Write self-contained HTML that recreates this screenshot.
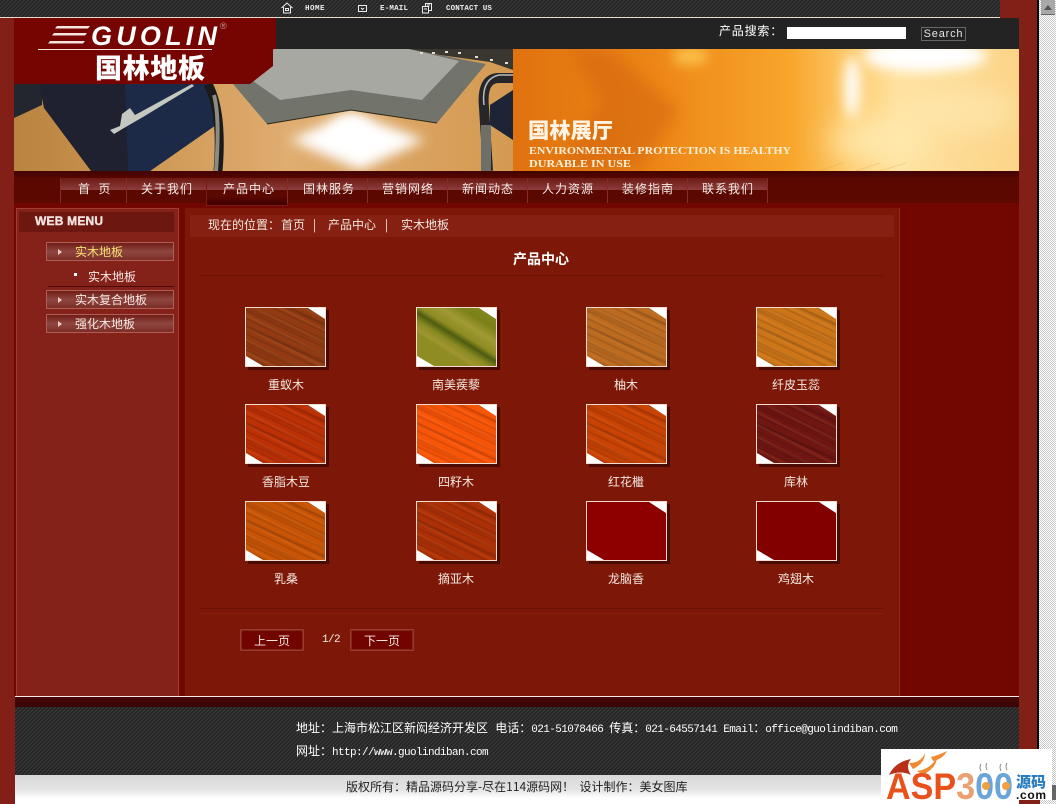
<!DOCTYPE html>
<html lang="zh"><head><meta charset="utf-8"><title>国林地板</title>
<style>
html,body{margin:0;padding:0;width:1056px;height:804px;overflow:hidden}
body{position:relative;background:#822018;font:12px "WenQuanYi Zen Hei","Noto Sans CJK SC",sans-serif;color:#f4e8e0}
.a{position:absolute}
.t{position:absolute;white-space:nowrap;line-height:16px;height:16px}
.c{text-align:center;width:120px}
.stripe{background:repeating-linear-gradient(135deg,#3a3a3a 0 .9px,#252525 .9px 2.828px)}
.nav{position:absolute;top:178px;height:25px;border-left:1px solid #8a2c24;background:linear-gradient(#6d1a14 0,#8c3c3a 12px,#5a0800 12px)}
.nt{position:absolute;top:181px;white-space:nowrap;line-height:16px;color:#f5ece6;letter-spacing:1px}
.mi{position:absolute;left:46px;width:126px;height:17px;border:1px solid #b05f58;background:linear-gradient(#701c16,#8e4640 50%,#7d2c26)}
.ar{position:absolute;left:58px;width:0;height:0;border-left:4px solid #e8c8c0;border-top:3px solid transparent;border-bottom:3px solid transparent}
.th{position:absolute;width:79px;height:58px;background:#fff;border:1px solid #f2dcd0;box-shadow:3px 3px 0 #4a0a04;overflow:hidden}
.th div{width:100%;height:100%;clip-path:polygon(0 0,62px 0,100% 11px,100% 100%,17px 100%,0 48px)}
.w{background-image:repeating-linear-gradient(25deg,rgba(0,0,0,.1) 0 1.500px,transparent 2.500px 7px),repeating-linear-gradient(27deg,rgba(255,190,110,.08) 0 2px,transparent 3px 11px),repeating-linear-gradient(24deg,rgba(0,0,0,.08) 0 3px,transparent 4px 17px)}
.pg{position:absolute;top:629px;height:20px;border:1px solid #963a30;background:#720400;box-shadow:inset 0 0 0 1px #84261c;text-align:center;line-height:21px;color:#f4e8e0}
.m{font-family:"Liberation Mono","WenQuanYi Zen Hei",monospace;font-size:11px;letter-spacing:-.6px}
.m span{letter-spacing:0}
</style></head><body>

<!-- scrollbar -->
<div class="a" style="left:1037px;top:0;width:2px;height:804px;background:#000"></div>
<div class="a" style="left:1039px;top:0;width:17px;height:804px;background:repeating-conic-gradient(#c8c8c8 0 25%,#fff 0 50%) 0 0/2px 2px"></div>
<div class="a" style="left:1041px;top:0;width:14px;height:14px;background:#a8a8a8;border-bottom:1px solid #666"></div>
<div class="a" style="left:1044px;top:5px;width:0;height:0;border-left:4px solid transparent;border-right:4px solid transparent;border-bottom:5px solid #555"></div>

<!-- top bar -->
<div class="a stripe" style="left:0;top:0;width:1000px;height:17px"></div>
<div class="a" style="left:0;top:17px;width:1000px;height:1px;background:#e8dcc8"></div>
<svg class="a" style="left:280px;top:2px" width="14" height="13" viewBox="0 0 14 13" fill="none" stroke="#eee" stroke-width="1"><path d="M1.500 6L7 1l5.500 5M3.500 5V11h7V5M5.500 6.500h3v2h-3z"/></svg>
<svg class="a" style="left:358px;top:5px" width="10" height="8" viewBox="0 0 10 8" fill="none" stroke="#eee" stroke-width="1"><path d="M.5.500h8v6h-8zM3 3l1.500 1.500L6 3"/></svg>
<svg class="a" style="left:422px;top:3px" width="11" height="11" viewBox="0 0 11 11" fill="none" stroke="#eee" stroke-width="1"><path d="M3.500 3V.500h6v7H7M.5 3.500h6v6.500h-6zM2 6h3M5 2h3"/></svg>
<div class="t" style="left:305px;top:1px;font:bold 7.500px/17px 'Liberation Mono',monospace;color:#eee;letter-spacing:.5px">HOME</div>
<div class="t" style="left:380px;top:1px;font:bold 7.500px/17px 'Liberation Mono',monospace;color:#eee;letter-spacing:.2px">E-MAIL</div>
<div class="t" style="left:446px;top:1px;font:bold 7.500px/17px 'Liberation Mono',monospace;color:#eee;letter-spacing:.1px">CONTACT US</div>

<!-- header band -->
<div class="a" style="left:14px;top:18px;width:1005px;height:31px;background:#232323"></div>
<div class="t" style="left:719px;top:23px;color:#fff;letter-spacing:.8px">产品搜索：</div>
<div class="a" style="left:787px;top:27px;width:119px;height:12px;background:#fff"></div>
<div class="a" style="left:921px;top:27px;width:43px;height:12px;border:1px solid #666;font:11px/13px 'Liberation Sans',sans-serif;color:#e4e4e4;text-align:center;letter-spacing:.8px">Search</div>

<!-- banner -->
<svg class="a" style="left:14px;top:49px" width="1005" height="122" viewBox="14 49 1005 122">
<defs>
<linearGradient id="fl" x1="0" x2="1" y1="0" y2="0"><stop offset="0" stop-color="#b98440"/><stop offset=".2" stop-color="#c9924e"/><stop offset=".55" stop-color="#e0ad70"/><stop offset="1" stop-color="#d49a52"/></linearGradient>
<linearGradient id="or" x1="0" x2="1" y1="0" y2="0"><stop offset="0" stop-color="#e0720f"/><stop offset=".3" stop-color="#ee8818"/><stop offset=".55" stop-color="#f8a62c"/><stop offset=".66" stop-color="#fdc868"/><stop offset=".76" stop-color="#ffe2a0"/><stop offset="1" stop-color="#fbd488"/></linearGradient>
<filter id="b6" x="-100%" y="-100%" width="300%" height="300%"><feGaussianBlur stdDeviation="6"/></filter>
<filter id="b12" x="-100%" y="-100%" width="300%" height="300%"><feGaussianBlur stdDeviation="13"/></filter>
<filter id="b2" x="-30%" y="-30%" width="160%" height="160%"><feGaussianBlur stdDeviation="8"/></filter>
<clipPath id="cl"><rect x="14" y="49" width="499" height="122"/></clipPath>
<clipPath id="cr"><rect x="513" y="49" width="506" height="122"/></clipPath>
</defs>
<g clip-path="url(#cl)">
<rect x="14" y="49" width="499" height="122" fill="url(#fl)"/>
<polygon points="351,112 425,140 360,170 290,140" fill="#fff" filter="url(#b6)"/>
<ellipse cx="351" cy="130" rx="20" ry="12" fill="#fff" filter="url(#b6)"/>
<polygon points="233,84 267,124 351,110 437,123 486,64 409,49 260,49" fill="#72746c"/>
<polygon points="274,49 253,81 280,100 351,90 422,100 459,61 409,49" fill="#a8a8a2"/>
<polyline points="267,124 351,110 437,123" fill="none" stroke="#2e2a18" stroke-width="1"/>
<polygon points="409,49 513,49 513,70 490,62 440,55" fill="#39372f"/>
<g fill="#e0e0d8"><rect x="420" y="52" width="3" height="2"/><rect x="432" y="52" width="3" height="2"/><rect x="445" y="51" width="3" height="2"/><rect x="458" y="52" width="3" height="2"/><rect x="475" y="56" width="3" height="2"/><rect x="490" y="59" width="3" height="2"/><rect x="505" y="62" width="3" height="2"/></g>
<polygon points="14,84 42,84 42,105 14,118" fill="#23252f"/>
<polygon points="39,84 210,84 216,125 150,171 91,171 44,108" fill="#1f2130"/>
<polygon points="125,84 210,84 216,125 150,171 128,171" fill="#1c2a48"/>
<polygon points="110,130 114,134 124,128 143,117 194,86 192,84 135,115 130,108 122,114 120,126" fill="#c4c8c0"/>
<path d="M208 84q15 28 10 87" fill="none" stroke="#1a1a1a" stroke-width="9"/>
<path d="M214 95q6 22 2 76" fill="none" stroke="#8c8c80" stroke-width="4"/>
<path d="M513 78h-14q-18 0-15 30l4 63" fill="none" stroke="#26262a" stroke-width="10"/>
<path d="M513 75h-14q-18 4-15 30" fill="none" stroke="#b8bcc0" stroke-width="1.500"/>
<polygon points="490,105 513,90 513,140 490,125" fill="#1c2436"/>
<rect x="481" y="125" width="10" height="46" fill="#6d7068"/>
</g>
<g clip-path="url(#cr)">
<rect x="513" y="49" width="506" height="122" fill="url(#or)"/>
<polygon points="610,49 680,110 640,171 560,171 600,100 570,49" fill="#d0620a" opacity=".5" filter="url(#b2)"/>
<ellipse cx="690" cy="56" rx="18" ry="9" fill="#ffd860" opacity=".7" filter="url(#b6)"/>
<ellipse cx="925" cy="56" rx="62" ry="16" fill="#fff" filter="url(#b6)"/>
<ellipse cx="852" cy="88" rx="8" ry="32" fill="#fff" filter="url(#b6)"/>
<ellipse cx="880" cy="140" rx="50" ry="24" fill="#ffeab0" opacity=".8" filter="url(#b12)"/>
<ellipse cx="960" cy="110" rx="60" ry="22" fill="#ffe8b0" opacity=".7" filter="url(#b12)"/>
<g stroke="#d88a30" stroke-width=".6" opacity=".4"><path d="M820 171l22-8M856 171l24-8M880 171l26-8"/></g>
</g>
<text x="528" y="138" font-family="'Noto Sans CJK SC',sans-serif" font-weight="900" font-size="21" fill="#fff3e4" textLength="85" lengthAdjust="spacingAndGlyphs">国林展厅</text>
<text x="529" y="154" font-family="'Liberation Serif',serif" font-weight="700" font-size="11" fill="#fff0d8" textLength="262" lengthAdjust="spacingAndGlyphs">ENVIRONMENTAL PROTECTION IS HEALTHY</text>
<text x="529" y="167" font-family="'Liberation Serif',serif" font-weight="700" font-size="11" fill="#fff0d8" textLength="102" lengthAdjust="spacingAndGlyphs">DURABLE IN USE</text>
</svg>

<!-- logo -->
<div class="a" style="left:14px;top:18px;width:262px;height:66px;background:#760400;clip-path:polygon(0 0,100% 0,100% 31px,259px 31px,259px 48px,236px 66px,0 66px)"></div>
<svg class="a" style="left:14px;top:18px" width="230" height="66" viewBox="0 0 230 66">
<path d="M43 8h33l-2 2.500H41zM40 15h33l-2 2.500H38zM36 23h35l-2 2.500H34z" fill="#f5e5e0"/>
<rect x="24" y="31" width="174" height="1" fill="#f5e5e0"/>
<text x="77" y="27" font-family="'Liberation Sans',sans-serif" font-weight="700" font-style="italic" font-size="27" fill="#fff" textLength="126">GUOLIN</text>
<text x="206" y="11" font-family="'Liberation Sans',sans-serif" font-size="9" fill="#c89a94">®</text>
<text x="81" y="60" font-family="'Noto Sans CJK SC',sans-serif" font-weight="900" font-size="27" fill="#fff" textLength="110">国林地板</text>
</svg>

<!-- nav band -->
<div class="a" style="left:14px;top:171px;width:1005px;height:32px;background:linear-gradient(#430400 0,#500500 5px,#5a0800 7px)"></div>
<!-- main bg -->
<div class="a" style="left:14px;top:203px;width:1005px;height:493px;background:#720600"></div>

<div class="nav" style="left:60px;width:65px"></div>
<div class="nav" style="left:126px;width:79px"></div>
<div class="a" style="left:206px;top:178px;width:80px;height:27px;border:1px solid #7a1a14;border-top:0;background:linear-gradient(#6d1a14 0,#8c3c3a 12px,#5a0800 12px,#5a0800 19px,#3e0000)"></div>
<div class="nav" style="left:287px;width:79px"></div>
<div class="nav" style="left:367px;width:79px"></div>
<div class="nav" style="left:447px;width:79px"></div>
<div class="nav" style="left:527px;width:79px"></div>
<div class="nav" style="left:607px;width:79px"></div>
<div class="nav" style="left:687px;width:79px;border-right:1px solid #8a2c24"></div>
<div class="nt" style="left:78px;letter-spacing:1px">首&nbsp;&nbsp;页</div>
<div class="nt" style="left:141px">关于我们</div>
<div class="nt" style="left:223px">产品中心</div>
<div class="nt" style="left:303px">国林服务</div>
<div class="nt" style="left:382px">营销网络</div>
<div class="nt" style="left:462px">新闻动态</div>
<div class="nt" style="left:542px">人力资源</div>
<div class="nt" style="left:622px">装修指南</div>
<div class="nt" style="left:702px">联系我们</div>

<!-- sidebar -->
<div class="a" style="left:16px;top:208px;width:161px;height:488px;background:#84221a;border:1px solid #a43c32;border-bottom:0"></div>
<div class="a" style="left:19px;top:212px;width:155px;height:20px;background:#6c1710"></div>
<div class="t" style="left:35px;top:213px;font:bold 12px/16px 'Liberation Sans',sans-serif;color:#f4e4e0;letter-spacing:.2px;-webkit-text-stroke:.4px #f4e4e0">WEB MENU</div>
<div class="mi" style="top:242px"></div><div class="ar" style="top:249px"></div>
<div class="t" style="left:75px;top:244px;color:#f6e070">实木地板</div>
<div class="a" style="left:74px;top:273px;width:3px;height:3px;background:#fff"></div>
<div class="t" style="left:88px;top:269px">实木地板</div>
<div class="a" style="left:48px;top:286px;width:126px;height:1px;background:#4e0a06"></div>
<div class="mi" style="top:290px"></div><div class="ar" style="top:297px"></div>
<div class="t" style="left:75px;top:292px">实木复合地板</div>
<div class="mi" style="top:314px"></div><div class="ar" style="top:321px"></div>
<div class="t" style="left:75px;top:316px">强化木地板</div>

<!-- content -->
<div class="a" style="left:179px;top:208px;width:6px;height:488px;background:#6e0a02"></div>
<div class="a" style="left:185px;top:208px;width:714px;height:488px;background:#7d1808;border-right:1px solid #8e2a1c"></div>
<div class="a" style="left:190px;top:215px;width:704px;height:22px;background:#852012"></div>
<div class="t" style="left:208px;top:217px">现在的位置：</div>
<div class="t" style="left:281px;top:217px">首页</div>
<div class="t" style="left:313px;top:217px">|</div>
<div class="t" style="left:328px;top:217px">产品中心</div>
<div class="t" style="left:385px;top:217px">|</div>
<div class="t" style="left:401px;top:217px">实木地板</div>
<div class="t" style="left:441px;top:251px;width:200px;text-align:center;font-size:14px;font-weight:700;color:#fff">产品中心</div>
<div class="a" style="left:200px;top:275px;width:684px;height:1px;background:#6c1206"></div>

<div class="th" style="left:245px;top:307px"><div class="w" style="background-color:#923a12"></div></div>
<div class="th" style="left:416px;top:307px"><div style="background:linear-gradient(32deg,#8e8c22 0 30%,#a09630 34%,#8a8a22 42%,#4e5c10 50%,#8e8c22 56%,#a09a34 68%,#7a8018 80%,#8e8c22)"></div></div>
<div class="th" style="left:586px;top:307px"><div class="w" style="background-color:#bc6a20"></div></div>
<div class="th" style="left:756px;top:307px"><div class="w" style="background-color:#cc7418"></div></div>
<div class="th" style="left:245px;top:404px"><div class="w" style="background-color:#bc3006"></div></div>
<div class="th" style="left:416px;top:404px"><div class="w" style="background-color:#f85408"></div></div>
<div class="th" style="left:586px;top:404px"><div class="w" style="background-color:#c84204"></div></div>
<div class="th" style="left:756px;top:404px"><div class="w" style="background-color:#701612"></div></div>
<div class="th" style="left:245px;top:501px"><div class="w" style="background-color:#c85406"></div></div>
<div class="th" style="left:416px;top:501px"><div class="w" style="background-color:#ac3006"></div></div>
<div class="th" style="left:586px;top:501px"><div style="background:#8e0000"></div></div>
<div class="th" style="left:756px;top:501px"><div style="background:#820000"></div></div>

<div class="t c" style="left:226px;top:377px">重蚁木</div>
<div class="t c" style="left:396px;top:377px">南美蒺藜</div>
<div class="t c" style="left:566px;top:377px">柚木</div>
<div class="t c" style="left:736px;top:377px">纤皮玉蕊</div>
<div class="t c" style="left:226px;top:474px">香脂木豆</div>
<div class="t c" style="left:396px;top:474px">四籽木</div>
<div class="t c" style="left:566px;top:474px">红花檵</div>
<div class="t c" style="left:736px;top:474px">库林</div>
<div class="t c" style="left:226px;top:571px">乳桑</div>
<div class="t c" style="left:396px;top:571px">摘亚木</div>
<div class="t c" style="left:566px;top:571px">龙脑香</div>
<div class="t c" style="left:736px;top:571px">鸡翅木</div>

<div class="a" style="left:200px;top:608px;width:684px;height:1px;background:#6c1206"></div>
<div class="a" style="left:200px;top:613px;width:684px;height:1px;background:#841e0e"></div>

<div class="pg" style="left:240px;width:62px">上一页</div>
<div class="t m" style="left:322px;top:632px">1/2</div>
<div class="pg" style="left:350px;width:62px">下一页</div>

<!-- footer -->
<div class="a" style="left:15px;top:696px;width:1004px;height:1px;background:#f4ece8"></div>
<div class="a" style="left:15px;top:697px;width:1004px;height:10px;background:linear-gradient(#4a0808,#380404)"></div>
<div class="a stripe" style="left:15px;top:707px;width:1004px;height:68px"></div>
<div class="a" style="left:15px;top:775px;width:1004px;height:29px;background:linear-gradient(#d8d8d8,#e4e4e4 50%,#fff 80%)"></div>
<div class="t m" style="left:296px;top:721px;color:#fff"><span style="font-size:12px">地址：上海市松江区新闳经济开发区 电话：</span>021-51078466 <span style="font-size:12px">传真：</span>021-64557141 Email<span style="font-size:12px">：</span>office@guolindiban.com</div>
<div class="t m" style="left:296px;top:744px;color:#fff"><span style="font-size:12px">网址：</span>http://www.guolindiban.com</div>
<div class="t" style="left:346px;top:779px;color:#222">版权所有：精品源码分享-尽在114源码网！&nbsp;&nbsp;设计制作：美女图库</div>

<!-- watermark -->
<div class="a" style="left:1019px;top:800px;width:21px;height:4px;background:#822018"></div>
<div class="a" style="left:881px;top:749px;width:171px;height:51px;background:#fff"></div>
<svg class="a" style="left:881px;top:749px" width="171" height="52" viewBox="0 0 171 52">
<path d="M8 26Q14 13 30 10Q24 17 30 26Q20 21 8 26z" fill="#b83018"/>
<path d="M28 14Q40 14 44 4Q44 14 32 20zM36 22Q50 20 56 8Q56 18 42 26zM50 8Q58 6 66 2Q62 10 52 12z" fill="#ee8a30"/>
<text x="5" y="50" font-family="'Liberation Sans',sans-serif" font-weight="700" font-size="37" textLength="127" lengthAdjust="spacingAndGlyphs"><tspan fill="#e8501c">ASP</tspan><tspan fill="#eaa070">3</tspan><tspan fill="#6aa4d8">00</tspan></text>
<circle cx="105" cy="37" r="4" fill="#f0a040"/><circle cx="125" cy="37" r="4" fill="#f0a040"/>
<path d="M100 22q-2-4 0-7M106 21q-2-4 0-7M120 22q-2-4 0-7M126 21q-2-4 0-7" stroke="#888" fill="none"/>
<text x="135" y="38" font-family="'Noto Sans CJK SC',sans-serif" font-weight="900" font-size="15" fill="#2a7cc0" textLength="30">源码</text>
<text x="135" y="50" font-family="'Liberation Sans',sans-serif" font-weight="700" font-size="12" fill="#111" textLength="30">.com</text>
</svg>
<div class="a" style="left:1052px;top:785px;width:4px;height:15px;background:#666"></div>
</body></html>
